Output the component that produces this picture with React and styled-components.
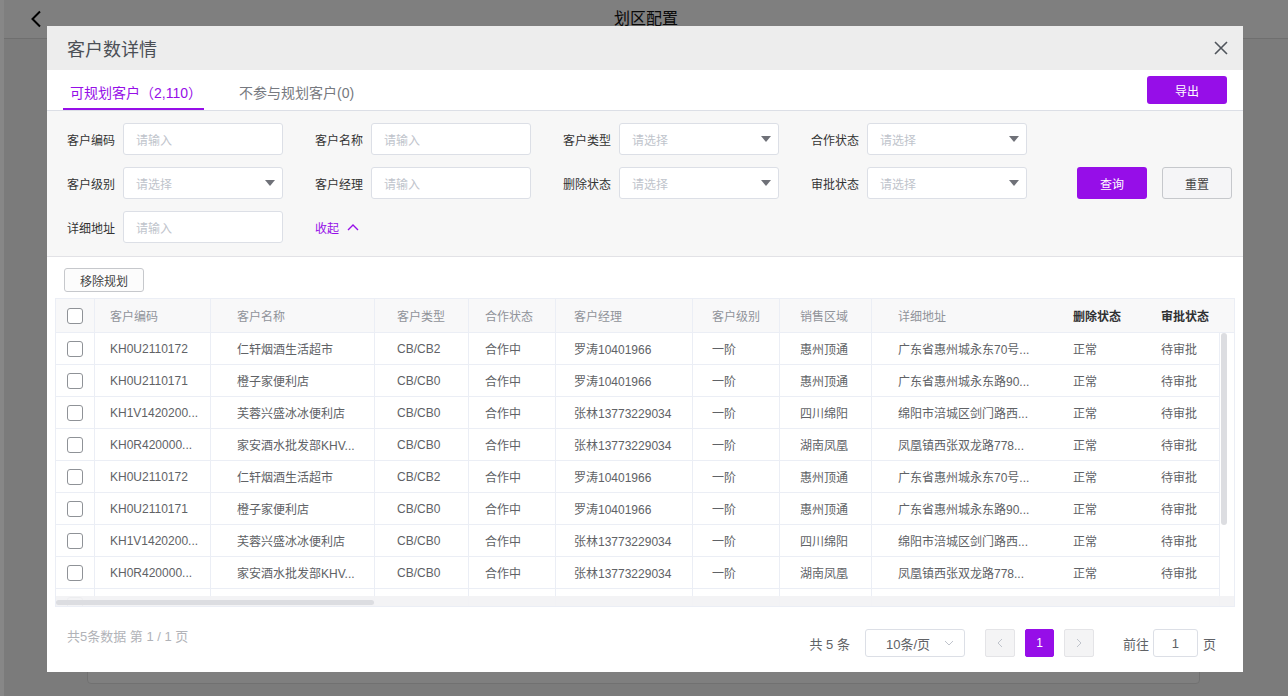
import React from "react";
import styled, { createGlobalStyle } from "styled-components";

const PURPLE = "#960ee8";
const COLS = "39px 116px 164px 94px 87px 137px 87px 92px 186px 88px 1fr";

const columns = [
  { key: "code", title: "客户编码", pl: 15, line: true },
  { key: "name", title: "客户名称", pl: 26, line: true },
  { key: "type", title: "客户类型", pl: 22, line: true },
  { key: "coop", title: "合作状态", pl: 16, line: true },
  { key: "manager", title: "客户经理", pl: 18, line: true },
  { key: "level", title: "客户级别", pl: 19, line: true },
  { key: "region", title: "销售区域", pl: 20, line: true },
  { key: "address", title: "详细地址", pl: 26 },
  { key: "del", title: "删除状态", pl: 15, strong: true },
  { key: "approve", title: "审批状态", pl: 15, strong: true },
];

const base = [
  {
    code: "KH0U2110172",
    name: "仁轩烟酒生活超市",
    type: "CB/CB2",
    manager: "罗涛10401966",
    region: "惠州顶通",
    address: "广东省惠州城永东70号...",
  },
  {
    code: "KH0U2110171",
    name: "橙子家便利店",
    type: "CB/CB0",
    manager: "罗涛10401966",
    region: "惠州顶通",
    address: "广东省惠州城永东路90...",
  },
  {
    code: "KH1V1420200...",
    name: "芙蓉兴盛冰冰便利店",
    type: "CB/CB0",
    manager: "张林13773229034",
    region: "四川绵阳",
    address: "绵阳市涪城区剑门路西...",
  },
  {
    code: "KH0R420000...",
    name: "家安酒水批发部KHV...",
    type: "CB/CB0",
    manager: "张林13773229034",
    region: "湖南凤凰",
    address: "凤凰镇西张双龙路778...",
  },
];

// 8 filled rows, then the next one only peeks in under the scrollbar
const rows = [
  ...Array.from({ length: 8 }, (_, i) => ({
    ...base[i % 4],
    coop: "合作中",
    level: "一阶",
    del: "正常",
    approve: "待审批",
  })),
  {},
];

const filterRows = [
  [
    { label: "客户编码", kind: "input" },
    { label: "客户名称", kind: "input" },
    { label: "客户类型", kind: "select" },
    { label: "合作状态", kind: "select" },
  ],
  [
    { label: "客户级别", kind: "select" },
    { label: "客户经理", kind: "input" },
    { label: "删除状态", kind: "select" },
    { label: "审批状态", kind: "select" },
  ],
];

function FilterField({ label, kind }) {
  return (
    <Field>
      <FieldLabel>{label}</FieldLabel>
      <InputBox>
        <Placeholder>{kind === "select" ? "请选择" : "请输入"}</Placeholder>
        {kind === "select" && <Caret />}
      </InputBox>
    </Field>
  );
}

function App() {
  return (
    <>
      <GlobalStyle />
      <Page>
        <SideEdge />
        <Main>
          <TopBar>
            <BackButton>
              <svg width="12" height="18" viewBox="0 0 12 18">
                <path d="M10 1.5 L2.5 9 L10 16.5" fill="none" stroke="#000" strokeWidth="2" />
              </svg>
            </BackButton>
            <PageTitle>划区配置</PageTitle>
            <span />
          </TopBar>
          <PageBody>
            <Card />
          </PageBody>
        </Main>

        <Overlay>
          <Modal>
            <ModalHeader>
              <ModalTitle>客户数详情</ModalTitle>
              <CloseButton>
                <svg width="14" height="14" viewBox="0 0 14 14">
                  <path d="M1 1 L13 13 M13 1 L1 13" stroke="#50555c" strokeWidth="1.6" />
                </svg>
              </CloseButton>
            </ModalHeader>

            <TabBar>
              <Tab $active>可规划客户（2,110）</Tab>
              <Tab>不参与规划客户(0)</Tab>
              <PrimaryButton $w={80} $h={28} $push>
                导出
              </PrimaryButton>
            </TabBar>

            <Filters>
              <FilterRow>
                {filterRows[0].map((f) => (
                  <FilterField key={f.label} {...f} />
                ))}
              </FilterRow>
              <FilterRow>
                {filterRows[1].map((f) => (
                  <FilterField key={f.label} {...f} />
                ))}
                <FilterActions>
                  <PrimaryButton $w={70} $h={32}>查询</PrimaryButton>
                  <GhostButton $w={70} $h={32}>重置</GhostButton>
                </FilterActions>
              </FilterRow>
              <FilterRow>
                <FilterField label="详细地址" kind="input" />
                <Collapse>
                  收起
                  <svg width="12" height="8" viewBox="0 0 12 8">
                    <path d="M1 7 L6 2 L11 7" fill="none" stroke={PURPLE} strokeWidth="1.4" />
                  </svg>
                </Collapse>
              </FilterRow>
            </Filters>

            <TableSection>
              <Toolbar>
                <GhostButton $w={80} $h={24} $light>移除规划</GhostButton>
              </Toolbar>
              <Table>
                <HeadRow>
                  <CheckCell>
                    <Check />
                  </CheckCell>
                  {columns.map((c) => (
                    <HeadCell key={c.key} $pl={c.pl} $line={c.line} $strong={c.strong}>
                      {c.title}
                    </HeadCell>
                  ))}
                </HeadRow>
                <BodyViewport>
                  <BodyRows>
                    {rows.map((r, i) => (
                      <BodyRow key={i}>
                        <CheckCell>
                          <Check />
                        </CheckCell>
                        {columns.map((c) => (
                          <BodyCell key={c.key} $pl={c.pl} $line={c.line}>
                            {r[c.key]}
                          </BodyCell>
                        ))}
                      </BodyRow>
                    ))}
                  </BodyRows>
                  <VScroll>
                    <Thumb />
                  </VScroll>
                  <HScroll>
                    <Thumb $horizontal />
                  </HScroll>
                </BodyViewport>
              </Table>
            </TableSection>

            <Footer>
              <Summary>共5条数据 第 1 / 1 页</Summary>
              <Pager>
                <PagerText>共 5 条</PagerText>
                <SizeSelect>
                  10条/页
                  <svg width="10" height="6" viewBox="0 0 10 6">
                    <path d="M1 1 L5 5 L9 1" fill="none" stroke="#c0c4cc" strokeWidth="1" />
                  </svg>
                </SizeSelect>
                <PageNav>
                  <PageBtn>
                    <svg width="6" height="10" viewBox="0 0 6 10">
                      <path d="M5 1 L1 5 L5 9" fill="none" stroke="#c0c4cc" strokeWidth="1" />
                    </svg>
                  </PageBtn>
                  <PageBtn $active>1</PageBtn>
                  <PageBtn>
                    <svg width="6" height="10" viewBox="0 0 6 10">
                      <path d="M1 1 L5 5 L1 9" fill="none" stroke="#c0c4cc" strokeWidth="1" />
                    </svg>
                  </PageBtn>
                </PageNav>
                <Jumper>
                  前往
                  <JumpInput>1</JumpInput>
                  页
                </Jumper>
              </Pager>
            </Footer>
          </Modal>
        </Overlay>
      </Page>
    </>
  );
}

export default App;

const GlobalStyle = createGlobalStyle`
  html, body {
    margin: 0;
    padding: 0;
  }
  body {
    font-family: "Liberation Sans", "Noto Sans CJK SC", sans-serif;
    overflow: hidden;
  }
  * {
    box-sizing: border-box;
  }
`;

const Page = styled.div`
  position: relative;
  width: 1288px;
  height: 696px;
  display: flex;
  background: #e8e8e8;
  overflow: hidden;
`;

const SideEdge = styled.div`
  width: 4px;
  background: #ffffff;
`;

const Main = styled.div`
  flex: 1;
  display: flex;
  flex-direction: column;
`;

const TopBar = styled.header`
  height: 39px;
  display: grid;
  grid-template-columns: 1fr auto 1fr;
  align-items: center;
  background: #f0f0f0;
  border-bottom: 1px solid #d2d2d2;
`;

const BackButton = styled.div`
  padding-left: 26px;
  display: flex;
  align-items: center;
`;

const PageTitle = styled.div`
  font-size: 16px;
  line-height: 20px;
  color: #111;
  margin-top: -1px;
`;

const PageBody = styled.div`
  flex: 1;
  display: flex;
  padding: 14px 88px 12px 83px;
`;

const Card = styled.div`
  flex: 1;
  background: #f0f0f0;
  border: 1px solid #d6d6d6;
  border-radius: 4px;
`;

const Overlay = styled.div`
  position: fixed;
  inset: 0;
  background: rgba(0, 0, 0, 0.47);
  padding: 26px 0 0 47px;
`;

const Modal = styled.div`
  width: 1196px;
  height: 646px;
  background: #fff;
  display: flex;
  flex-direction: column;
`;

const ModalHeader = styled.div`
  height: 44px;
  flex-shrink: 0;
  background: #ededed;
  display: flex;
  align-items: center;
  justify-content: space-between;
  padding: 0 15px 0 20px;
`;

const ModalTitle = styled.h2`
  margin: 0;
  font-size: 18px;
  font-weight: normal;
  color: #4b4f56;
`;

const CloseButton = styled.div`
  width: 14px;
  height: 14px;
  display: flex;
`;

const TabBar = styled.div`
  height: 41px;
  flex-shrink: 0;
  display: flex;
  align-items: stretch;
  gap: 28px;
  padding: 0 16px;
  border-bottom: 1px solid #dcdfe6;
`;

const Tab = styled.div`
  height: 40px;
  padding: 6px 2px 0 7px;
  display: flex;
  align-items: center;
  font-size: 14px;
  color: ${(p) => (p.$active ? PURPLE : "#767980")};
  border-bottom: 2px solid ${(p) => (p.$active ? PURPLE : "transparent")};
`;

const PrimaryButton = styled.div`
  width: ${(p) => p.$w}px;
  height: ${(p) => p.$h}px;
  align-self: center;
  margin-left: ${(p) => (p.$push ? "auto" : "0")};
  display: flex;
  align-items: center;
  justify-content: center;
  background: ${PURPLE};
  color: #fff;
  font-size: 12px;
  border-radius: 3px;
`;

const GhostButton = styled.div`
  width: ${(p) => p.$w}px;
  height: ${(p) => p.$h}px;
  display: flex;
  align-items: center;
  justify-content: center;
  background: ${(p) => (p.$light ? "#fcfcfc" : "#f5f5f7")};
  border: 1px solid #c6c8cc;
  color: #444;
  font-size: 12px;
  border-radius: 3px;
`;

const Filters = styled.div`
  flex-shrink: 0;
  background: #f7f7f7;
  border-bottom: 1px solid #e2e2e6;
  padding: 12px 11px 13px 20px;
  display: flex;
  flex-direction: column;
  gap: 12px;
`;

const FilterRow = styled.div`
  display: flex;
  align-items: center;
  gap: 32px;
  height: 32px;
`;

const Field = styled.div`
  display: flex;
  align-items: center;
  width: 216px;
  height: 32px;
`;

const FieldLabel = styled.div`
  width: 56px;
  font-size: 12px;
  color: #333;
`;

const InputBox = styled.div`
  width: 160px;
  height: 32px;
  display: flex;
  align-items: center;
  justify-content: space-between;
  padding: 0 7px 0 12px;
  background: #fff;
  border: 1px solid #dcdfe6;
  border-radius: 3px;
`;

const Placeholder = styled.span`
  font-size: 12px;
  color: #c0c4cc;
`;

const Caret = styled.span`
  width: 0;
  height: 0;
  border-left: 5px solid transparent;
  border-right: 5px solid transparent;
  border-top: 6px solid #6f7178;
`;

const FilterActions = styled.div`
  margin-left: auto;
  display: flex;
  gap: 15px;
`;

const Collapse = styled.div`
  display: flex;
  align-items: center;
  gap: 8px;
  font-size: 12px;
  color: ${PURPLE};
`;

const TableSection = styled.div`
  flex-shrink: 0;
  padding: 11px 8px 0;
`;

const Toolbar = styled.div`
  padding-left: 9px;
  margin-bottom: 6px;
`;

const Table = styled.div`
  border: 1px solid #ebeef5;
`;

const HeadRow = styled.div`
  display: grid;
  grid-template-columns: ${COLS};
  height: 34px;
  background: #f8f8f9;
  border-bottom: 1px solid #ebeef5;
`;

const CheckCell = styled.div`
  display: flex;
  align-items: center;
  justify-content: center;
  border-right: 1px solid #ebeef5;
`;

const Check = styled.span`
  width: 16px;
  height: 16px;
  border: 1px solid #8f9297;
  border-radius: 3px;
  background: #fff;
`;

const HeadCell = styled.div`
  display: flex;
  align-items: center;
  padding-left: ${(p) => p.$pl}px;
  font-size: 12px;
  color: ${(p) => (p.$strong ? "#303133" : "#909399")};
  font-weight: ${(p) => (p.$strong ? "bold" : "normal")};
  border-right: ${(p) => (p.$line ? "1px solid #ebeef5" : "none")};
  white-space: nowrap;
`;

const BodyViewport = styled.div`
  position: relative;
  height: 273px;
  overflow: hidden;
`;

const BodyRows = styled.div`
  width: 1164px;
  border-right: 1px solid #ebeef5;
`;

const BodyRow = styled.div`
  display: grid;
  grid-template-columns: ${COLS};
  height: 32px;
  border-bottom: 1px solid #ebeef5;
`;

const BodyCell = styled.div`
  display: flex;
  align-items: center;
  padding-left: ${(p) => p.$pl}px;
  font-size: 12px;
  color: #606266;
  border-right: ${(p) => (p.$line ? "1px solid #ebeef5" : "none")};
  white-space: nowrap;
  overflow: hidden;
`;

const VScroll = styled.div`
  position: absolute;
  top: 0;
  right: 0;
  width: 14px;
  height: 263px;
  padding-left: 1px;
`;

const HScroll = styled.div`
  position: absolute;
  left: 0;
  right: 0;
  bottom: 0;
  height: 10px;
  padding-top: 4px;
  background: rgba(242, 242, 244, 0.94);
`;

const Thumb = styled.div`
  width: ${(p) => (p.$horizontal ? "318px" : "6px")};
  height: ${(p) => (p.$horizontal ? "5px" : "192px")};
  background: #dcdde1;
  border-radius: 3px;
`;

const Footer = styled.div`
  flex: 1;
  display: flex;
  align-items: flex-start;
  justify-content: space-between;
  padding: 0 27px 0 20px;
`;

const Summary = styled.div`
  margin-top: 21px;
  font-size: 13px;
  line-height: 18px;
  color: #b1b3b8;
`;

const Pager = styled.div`
  margin-top: 22px;
  display: flex;
  align-items: center;
  font-size: 13px;
  color: #606266;
`;

const PagerText = styled.span`
  margin-right: 15px;
`;

const SizeSelect = styled.div`
  width: 100px;
  height: 28px;
  display: flex;
  align-items: center;
  justify-content: space-between;
  padding: 0 10px 0 20px;
  border: 1px solid #dcdfe6;
  border-radius: 3px;
  margin-right: 20px;
`;

const PageNav = styled.div`
  display: flex;
  gap: 10px;
  margin-right: 29px;
`;

const PageBtn = styled.div`
  width: ${(p) => (p.$active ? 29 : 30)}px;
  height: 28px;
  display: flex;
  align-items: center;
  justify-content: center;
  font-size: 12px;
  color: #fff;
  background: ${(p) => (p.$active ? PURPLE : "#f4f4f5")};
  border: 1px solid ${(p) => (p.$active ? PURPLE : "#e4e4e7")};
  border-radius: 2px;
`;

const Jumper = styled.div`
  display: flex;
  align-items: center;
`;

const JumpInput = styled.div`
  width: 45px;
  height: 28px;
  margin: 0 5px 0 4px;
  display: flex;
  align-items: center;
  justify-content: center;
  border: 1px solid #dcdfe6;
  border-radius: 3px;
`;
